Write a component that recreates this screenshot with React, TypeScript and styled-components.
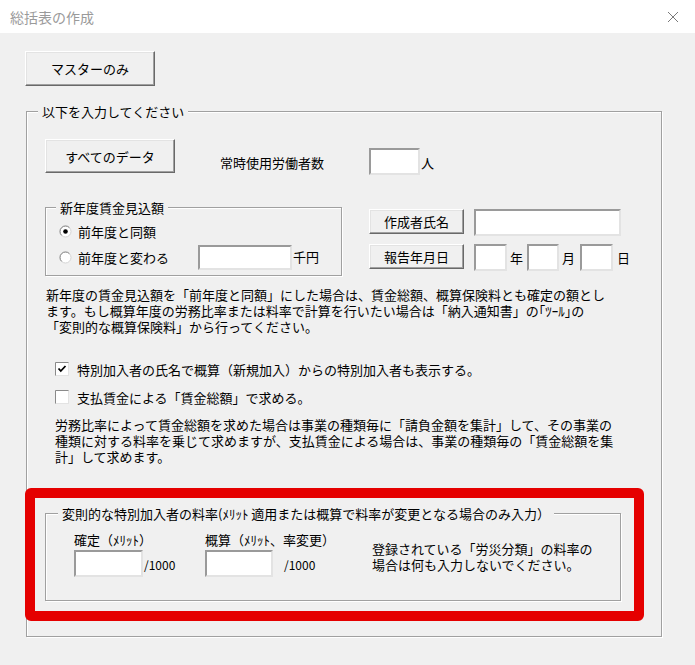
import styled, { createGlobalStyle } from "styled-components";

const GlobalStyle = createGlobalStyle`
  html, body {
    margin: 0;
    padding: 0;
  }
  body {
    width: 695px;
    height: 665px;
    overflow: hidden;
    font-family: "Noto Sans CJK JP", "Noto Sans", sans-serif;
    font-size: 13px;
    color: #000;
  }
`;

const Window = styled.div`
  width: 695px;
  height: 665px;
  display: flex;
  flex-direction: column;
`;

const TitleBar = styled.div`
  height: 33px;
  flex: none;
  background: #fff;
  display: flex;
  align-items: center;
  justify-content: space-between;
  padding: 0 16px 0 10px;
  box-sizing: border-box;
`;

const Title = styled.span`
  color: #9a9a9a;
  font-size: 14px;
`;

const Body = styled.div`
  flex: 1;
  background: #f0f0f0;
  padding: 18px 0 0 25px;
`;

const Button = styled.button<{ $w: number; $h: number }>`
  width: ${(p) => p.$w}px;
  height: ${(p) => p.$h}px;
  flex: none;
  padding: 0;
  font: inherit;
  color: #000;
  background: #f0f0f0;
  border: 1px solid;
  border-color: #fff #696969 #696969 #fff;
  box-shadow: inset -1px -1px 0 #a0a0a0, inset 1px 1px 0 #e3e3e3;
`;

const GroupBox = styled.div<{ $w: number; $pad: string }>`
  width: ${(p) => p.$w}px;
  box-sizing: border-box;
  flex: none;
  border: 1px solid #a0a0a0;
  box-shadow: inset 1px 1px 0 #fff, 1px 1px 0 #fff;
  padding: ${(p) => p.$pad};
`;

const Caption = styled.div<{ $x: number }>`
  width: fit-content;
  margin: -9px 0 0 ${(p) => p.$x}px;
  padding: 0 4px;
  line-height: 17px;
  background: #f0f0f0;
  white-space: nowrap;
`;

const MainFrame = styled(GroupBox)`
  margin: 25px 0 0 1px;
`;

const TopRow = styled.div`
  display: flex;
  align-items: flex-start;
  margin-top: 19px;
`;

const Text = styled.span<{ $ml?: number; $mt?: number }>`
  margin-left: ${(p) => p.$ml ?? 0}px;
  margin-top: ${(p) => p.$mt ?? 0}px;
  line-height: 16px;
  white-space: nowrap;
`;

const Field = styled.div<{ $w: number; $h?: number; $ml?: number; $mt?: number }>`
  width: ${(p) => p.$w}px;
  height: ${(p) => p.$h ?? 27}px;
  margin-left: ${(p) => p.$ml ?? 0}px;
  margin-top: ${(p) => p.$mt ?? 0}px;
  flex: none;
  box-sizing: border-box;
  background: #fff;
  border: 2px solid;
  border-color: #9a9a9a #e3e3e3 #e3e3e3 #9a9a9a;
`;

const MidRow = styled.div`
  display: flex;
  align-items: flex-start;
  margin-top: 32px;
`;

const RadioRow = styled.div<{ $h: number; $mt: number }>`
  display: flex;
  align-items: center;
  height: ${(p) => p.$h}px;
  margin-top: ${(p) => p.$mt}px;
`;

const RadioLabel = styled.span`
  width: 120px;
  margin-left: 6px;
  white-space: nowrap;
`;

const Side = styled.div`
  display: flex;
  flex-direction: column;
  gap: 8px;
  margin: 2px 0 0 27px;
`;

const SideRow = styled.div`
  display: flex;
  align-items: flex-start;
`;

const Unit = styled.span<{ $ml: number }>`
  margin-left: ${(p) => p.$ml}px;
  line-height: 27px;
`;

const Paragraph = styled.p<{ $ml: number; $mt: number }>`
  margin: ${(p) => p.$mt}px 0 0 ${(p) => p.$ml}px;
  line-height: 16px;
  white-space: nowrap;
`;

const CheckRow = styled.div<{ $mt: number }>`
  display: flex;
  align-items: center;
  gap: 8px;
  height: 18px;
  margin: ${(p) => p.$mt}px 0 0 10px;
`;

const RateSection = styled.div`
  position: relative;
  width: 576px;
  margin-top: 48px;
`;

const Highlight = styled.div`
  position: absolute;
  top: -25px;
  left: -20px;
  right: -23px;
  bottom: -20px;
  border: 10px solid #e50000;
  border-radius: 6px;
  pointer-events: none;
`;

const RateGrid = styled.div`
  display: grid;
  grid-template-columns: 131px 167px auto;
  grid-template-rows: 16px auto;
  margin-top: 10px;
`;

const RateInput = styled.div`
  display: flex;
  align-items: flex-start;
  margin-top: 2px;
`;

const PerMille = styled.span<{ $ml: number }>`
  margin: 7px 0 0 ${(p) => p.$ml}px;
  font-size: 12px;
  line-height: 16px;
`;

const Note = styled.p`
  grid-column: 3;
  grid-row: 1 / 3;
  align-self: center;
  margin: 4px 0 0;
  line-height: 16px;
  white-space: nowrap;
`;

function Radio({ on }: { on?: boolean }) {
  return (
    <svg width="13" height="13" viewBox="0 0 13 13">
      <circle cx="6.5" cy="6.5" r="5.5" fill="#fff" stroke="#d4d4d4" />
      <path d="M2.6 10.4A5.5 5.5 0 0 1 10.4 2.6" fill="none" stroke="#8a8a8a" />
      {on && <circle cx="6.5" cy="6.5" r="2.3" fill="#000" />}
    </svg>
  );
}

function Check({ on }: { on?: boolean }) {
  return (
    <svg width="14" height="14" viewBox="0 0 14 14">
      <rect x="0.5" y="0.5" width="13" height="13" fill="#fff" stroke="#e3e3e3" />
      <path d="M0.5 13.5V0.5H13.5" fill="none" stroke="#8a8a8a" />
      {on && <path d="M3.5 6.5l2.3 2.5 4.7-5" fill="none" stroke="#000" strokeWidth="1.8" />}
    </svg>
  );
}

function App() {
  return (
    <Window>
      <GlobalStyle />
      <TitleBar>
        <Title>総括表の作成</Title>
        <svg width="12" height="12" viewBox="0 0 12 12">
          <path d="M1 1l10 10M11 1L1 11" stroke="#7a7a7a" strokeWidth="1" />
        </svg>
      </TitleBar>
      <Body>
        <Button $w={130} $h={35}>マスターのみ</Button>
        <MainFrame $w={636} $pad="0 0 35px 18px">
          <Caption $x={-7}>以下を入力してください</Caption>
          <TopRow>
            <Button $w={130} $h={34}>すべてのデータ</Button>
            <Text $ml={45} $mt={16}>常時使用労働者数</Text>
            <Field $w={51} $ml={45} $mt={9} />
            <Text $ml={1} $mt={16}>人</Text>
          </TopRow>
          <MidRow>
            <GroupBox $w={297} $pad="0 0 5px 13px">
              <Caption $x={-3}>新年度賃金見込額</Caption>
              <RadioRow $h={18} $mt={6}>
                <Radio on />
                <RadioLabel>前年度と同額</RadioLabel>
              </RadioRow>
              <RadioRow $h={26} $mt={4}>
                <Radio />
                <RadioLabel>前年度と変わる</RadioLabel>
                <Field $w={94} $h={25} />
                <Text $ml={1}>千円</Text>
              </RadioRow>
            </GroupBox>
            <Side>
              <SideRow>
                <Button $w={95} $h={25}>作成者氏名</Button>
                <Field $w={147} $ml={10} />
              </SideRow>
              <SideRow>
                <Button $w={95} $h={25}>報告年月日</Button>
                <Field $w={33} $ml={10} />
                <Unit $ml={3}>年</Unit>
                <Field $w={32} $ml={4} />
                <Unit $ml={3}>月</Unit>
                <Field $w={33} $ml={5} />
                <Unit $ml={4}>日</Unit>
              </SideRow>
            </Side>
          </MidRow>
          <Paragraph $ml={1} $mt={11}>
            新年度の賃金見込額を「前年度と同額」にした場合は、賃金総額、概算保険料とも確定の額とし
            <br />
            ます。もし概算年度の労務比率または料率で計算を行いたい場合は「納入通知書」の｢ﾂｰﾙ｣の
            <br />
            「変則的な概算保険料」から行ってください。
          </Paragraph>
          <CheckRow $mt={25}>
            <Check on />
            <span>特別加入者の氏名で概算（新規加入）からの特別加入者も表示する。</span>
          </CheckRow>
          <CheckRow $mt={10}>
            <Check />
            <span>支払賃金による「賃金総額」で求める。</span>
          </CheckRow>
          <Paragraph $ml={10} $mt={11}>
            労務比率によって賃金総額を求めた場合は事業の種類毎に「請負金額を集計」して、その事業の
            <br />
            種類に対する料率を乗じて求めますが、支払賃金による場合は、事業の種類毎の「賃金総額を集
            <br />
            計」して求めます。
          </Paragraph>
          <RateSection>
            <GroupBox $w={576} $pad="0 0 23px 28px">
              <Caption $x={-16}>
                変則的な特別加入者の料率(ﾒﾘｯﾄ 適用または概算で料率が変更となる場合のみ入力）
              </Caption>
              <RateGrid>
                <Text>確定（ﾒﾘｯﾄ）</Text>
                <Text>概算（ﾒﾘｯﾄ、率変更）</Text>
                <RateInput>
                  <Field $w={69} />
                  <PerMille $ml={1}>/1000</PerMille>
                </RateInput>
                <RateInput>
                  <Field $w={68} />
                  <PerMille $ml={11}>/1000</PerMille>
                </RateInput>
                <Note>
                  登録されている「労災分類」の料率の
                  <br />
                  場合は何も入力しないでください。
                </Note>
              </RateGrid>
            </GroupBox>
            <Highlight />
          </RateSection>
        </MainFrame>
      </Body>
    </Window>
  );
}

export default App;
